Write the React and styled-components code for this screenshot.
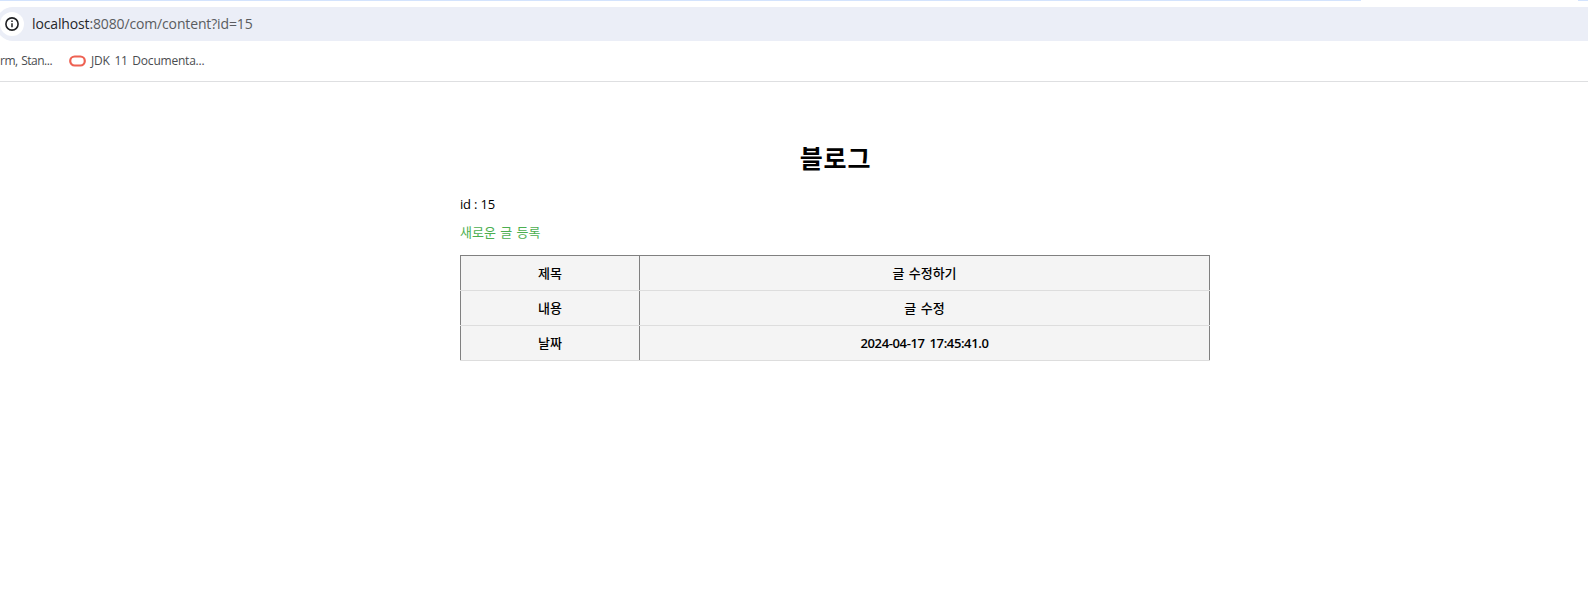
import React from "react";
import styled, { createGlobalStyle } from "styled-components";

const Global = createGlobalStyle`
  * { box-sizing: border-box; }
  body { margin: 0; background: #fff; overflow: hidden; }
`;

const Window = styled.div`
  width: 1588px;
  height: 597px;
  overflow: hidden;
  color: #000;
  font-family: "Open Sans", "Noto Sans CJK KR", sans-serif;
`;

const TabStrip = styled.div`
  height: 1px;
  display: flex;
  justify-content: space-between;
`;

const TabEdge = styled.div`
  width: ${(p) => p.$width}px;
  background: #d3e3fd;
`;

const AddressBar = styled.div`
  height: 34px;
  margin: 6px 0 0 -4px;
  padding-left: 4px;
  display: flex;
  align-items: center;
  gap: 8px;
  background: #ebeef7;
  border-radius: 17px 0 0 17px;
`;

const InfoButton = styled.div`
  width: 24px;
  height: 24px;
  border-radius: 50%;
  background: #fff;
  display: flex;
  align-items: center;
  justify-content: center;
`;

const Url = styled.div`
  font-size: 14px;
  line-height: 20px;
  letter-spacing: ${(p) => p.$spacing}px;
  color: #5a5c60;
  white-space: nowrap;
`;

const Host = styled.span`
  color: #25272a;
`;

const Bookmarks = styled.div`
  height: 41px;
  display: flex;
  align-items: center;
  padding-bottom: 1px;
  border-bottom: 1px solid #dedfe1;
`;

const Bookmark = styled.div`
  font-size: 12px;
  line-height: 16px;
  letter-spacing: ${(p) => p.$spacing || 0}px;
  word-spacing: ${(p) => p.$word || 0}px;
  color: #4a4c50;
  white-space: pre;
  margin-left: ${(p) => p.$left}px;
`;

const OracleMark = styled.svg`
  margin-left: 17px;
`;

const Page = styled.main`
  width: 750px;
  margin-left: 460px;
  padding-top: 59px;
`;

const Title = styled.h1`
  margin: 0;
  padding-left: 1px;
  font-size: 25px;
  line-height: 34px;
  font-weight: 700;
  letter-spacing: 0.9px;
  text-align: center;
`;

const Text = styled.p`
  margin: ${(p) => p.$top}px 0 0;
  font-size: 13px;
  line-height: 20px;
  letter-spacing: ${(p) => p.$spacing || 0}px;
  word-spacing: ${(p) => p.$word || 0}px;
`;

const Link = styled.a`
  color: #4caf50;
`;

const Table = styled.div`
  margin-top: 13px;
  border-top: 1px solid #808080;
`;

const Row = styled.div`
  display: grid;
  grid-template-columns: 180px 570px;
  height: 35px;
  border-bottom: 1px solid #ddd;
  background: #f4f4f4;
`;

const Cell = styled.div`
  display: flex;
  align-items: center;
  justify-content: center;
  border-right: 1px solid #808080;
  font-size: 13px;
  line-height: 20px;
  font-weight: ${(p) => p.$weight || 500};
  letter-spacing: ${(p) => p.$spacing || 0}px;
  word-spacing: ${(p) => p.$word || 0}px;
  &:first-child { border-left: 1px solid #808080; }
`;

const rows = [
  { label: "제목", value: "글 수정하기", word: 1 },
  { label: "내용", value: "글 수정", word: 1 },
  { label: "날짜", value: "2024-04-17 17:45:41.0", weight: 600, spacing: -0.38, word: 2 },
];

export default function App() {
  return (
    <Window>
      <Global />
      <TabStrip>
        <TabEdge $width={1361} />
        <TabEdge $width={10} />
      </TabStrip>
      <AddressBar>
        <InfoButton>
          <svg width="14" height="14" viewBox="0 0 14 14" fill="none" stroke="#1f2023">
            <circle cx="7" cy="7" r="6.1" strokeWidth="1.6" />
            <path d="M7 6.3v4M7 3.6v1.5" strokeWidth="1.5" />
          </svg>
        </InfoButton>
        <Url $spacing={-0.14}><Host>localhost</Host>:8080/com/content?id=15</Url>
      </AddressBar>
      <Bookmarks>
        <Bookmark $left={0} $spacing={-0.5} $word={1}>rm, Stan...</Bookmark>
        <OracleMark width="17" height="12" viewBox="0 0 17 12" fill="none">
          <rect x="1.2" y="1.5" width="14.6" height="9" rx="4.5" stroke="#ee6152" strokeWidth="2.2" />
        </OracleMark>
        <Bookmark $left={5} $spacing={-0.22} $word={1.8}>JDK 11 Documenta...</Bookmark>
      </Bookmarks>
      <Page>
        <Title>블로그</Title>
        <Text $top={19} $spacing={-0.2}>id : 15</Text>
        <Text $top={8} $word={1}><Link>새로운 글 등록</Link></Text>
        <Table>
          {rows.map((row) => (
            <Row key={row.label}>
              <Cell>{row.label}</Cell>
              <Cell $weight={row.weight} $spacing={row.spacing} $word={row.word}>{row.value}</Cell>
            </Row>
          ))}
        </Table>
      </Page>
    </Window>
  );
}
